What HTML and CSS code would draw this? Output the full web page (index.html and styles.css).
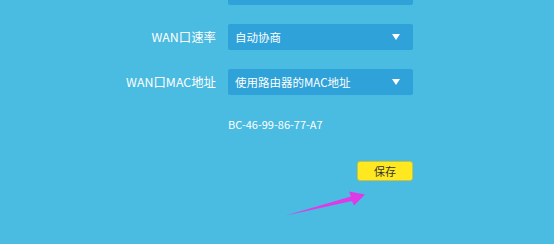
FILE: index.html
```html
<!DOCTYPE html>
<html lang="zh">
<head>
<meta charset="utf-8">
<link rel="stylesheet" href="styles.css">
</head>
<body>
<div class="page">
  <div class="form">
    <div class="row">
      <span class="label"></span>
      <div class="select"></div>
    </div>
    <div class="row">
      <label class="label">WAN口速率</label>
      <div class="select"><span>自动协商</span><span class="caret"></span></div>
    </div>
    <div class="row">
      <label class="label">WAN口MAC地址</label>
      <div class="select"><span>使用路由器的MAC地址</span><span class="caret"></span></div>
    </div>
    <div class="mac">BC-46-99-86-77-A7</div>
    <div class="actions">
      <button class="save">保存</button>
    </div>
  </div>
  <svg class="pointer" width="554" height="244" viewBox="0 0 554 244">
    <polygon points="286,215.5 351,196.5 349,191.5 365,194.5 354,205.5 352,201" fill="#e03ae6"/>
  </svg>
</div>
</body>
</html>
```

FILE: styles.css
```css
html, body {
  margin: 0;
  padding: 0;
}
body {
  background: #4abbe1;
  font-family: "Noto Sans CJK SC", "Noto Sans", sans-serif;
  color: #fff;
  width: 554px;
  height: 244px;
  overflow: hidden;
}
.page {
  position: relative;
  display: flow-root;
  width: 554px;
  height: 244px;
  overflow: hidden;
}
.form {
  display: flex;
  flex-direction: column;
  margin-top: -21px;
}
.row {
  display: flex;
  align-items: center;
  gap: 12px;
  height: 26px;
  margin-bottom: 19px;
}
.label {
  width: 216px;
  text-align: right;
  font-size: 12.4px;
  line-height: 26px;
}
.select {
  width: 185px;
  height: 26px;
  box-sizing: border-box;
  background: #2ea2d9;
  border-radius: 2px;
  display: flex;
  align-items: center;
  justify-content: space-between;
  padding: 0 13px 0 7px;
  font-size: 11.5px;
}
.caret {
  width: 0;
  height: 0;
  border-left: 4px solid transparent;
  border-right: 4px solid transparent;
  border-top: 6px solid #fff;
}
.mac {
  margin-left: 228px;
  margin-top: 3px;
  font-size: 11px;
  line-height: 14px;
}
.actions {
  display: flex;
  margin-left: 357px;
  margin-top: 30px;
}
.save {
  width: 56px;
  height: 20px;
  box-sizing: border-box;
  background: #ffe81f;
  border: 1px solid #c9c23a;
  border-radius: 3px;
  font-family: "Noto Sans CJK SC", sans-serif;
  font-size: 11px;
  color: #333;
  padding: 0;
  line-height: 18px;
}
.pointer {
  position: absolute;
  left: 0;
  top: 0;
  pointer-events: none;
}
```
